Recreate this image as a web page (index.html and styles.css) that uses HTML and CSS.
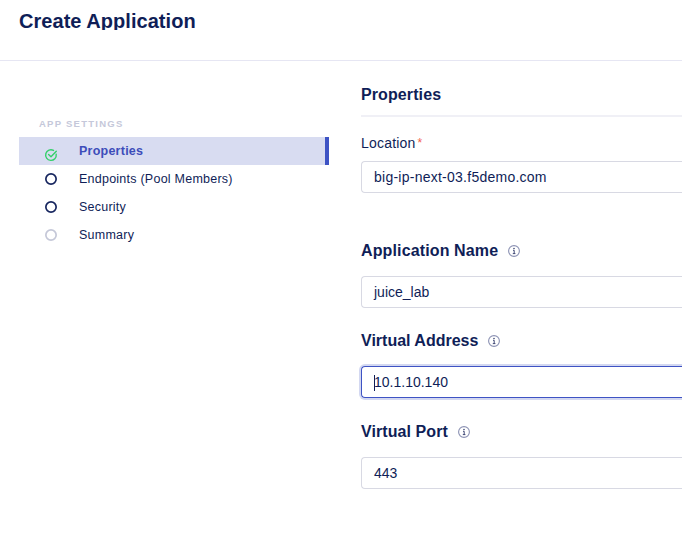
FILE: index.html
```html
<!DOCTYPE html>
<html lang="en">
<head>
<meta charset="utf-8">
<title>Create Application</title>
<link rel="stylesheet" href="styles.css">
</head>
<body>
<svg class="defs" aria-hidden="true">
  <symbol id="info" viewBox="0 0 12 12"><circle cx="6" cy="6" r="5.4" fill="none" stroke="#8b91b3" stroke-width="1.1"/><path d="M5 5.3h1.2v3.2M4.8 8.6h2.6" fill="none" stroke="#2d3768" stroke-width=".9"/><circle cx="6" cy="3.4" r=".75" fill="#2d3768"/></symbol>
</svg>
<header class="page-header"><h1>Create Application</h1></header>
<div class="layout">
  <nav class="sidebar">
    <div class="group-title">APP SETTINGS</div>
    <ul>
      <li class="step active"><svg class="mark check" viewBox="0 0 12 12"><path d="M11.2 5.3A5.3 5.3 0 1 1 8.5 1.4M3.6 5.4 6 7.7l5.3-5.5"/></svg><span>Properties</span></li>
      <li class="step"><svg class="mark ring" viewBox="0 0 12 12"><circle cx="6" cy="6" r="5.15"/></svg><span>Endpoints (Pool Members)</span></li>
      <li class="step"><svg class="mark ring" viewBox="0 0 12 12"><circle cx="6" cy="6" r="5.15"/></svg><span>Security</span></li>
      <li class="step"><svg class="mark ring muted" viewBox="0 0 12 12"><circle cx="6" cy="6" r="5.15"/></svg><span>Summary</span></li>
    </ul>
  </nav>
  <main class="content">
    <h2 class="section-title">Properties</h2>
    <label class="label"><span>Location</span><b>*</b></label>
    <div class="field location"><span>big-ip-next-03.f5demo.com</span></div>
    <h3 class="name"><span>Application Name</span><svg><use href="#info"/></svg></h3>
    <div class="field"><span>juice_lab</span></div>
    <h3 class="address"><span>Virtual Address</span><svg><use href="#info"/></svg></h3>
    <div class="field focused"><i class="caret"></i><span>10.1.10.140</span></div>
    <h3 class="port"><span>Virtual Port</span><svg><use href="#info"/></svg></h3>
    <div class="field"><span>443</span></div>
  </main>
</div>
</body>
</html>
```
FILE: styles.css
```css
* { box-sizing: border-box; }
body { margin: 0; width: 682px; height: 557px; overflow: hidden; background: #fff; color: #0f1e57; font-family: "Liberation Sans", Arial, sans-serif; }
.defs { display: none; }
h1, h2, h3, ul { margin: 0; padding: 0; }
.page-header { height: 61px; padding: 9px 19px; border-bottom: 1px solid #e6e6f3; }
h1 { height: 21px; overflow: hidden; font-size: 20px; line-height: 24px; letter-spacing: .04px; }
.layout { display: flex; padding-left: 19px; }
.sidebar { flex: none; width: 310px; padding-top: 56px; }
.group-title { height: 20px; padding-left: 20px; font-size: 9.5px; line-height: 13px; font-weight: bold; letter-spacing: 1.25px; color: #c5c8da; }
ul { list-style: none; }
.step { display: flex; align-items: center; height: 28px; padding-left: 26px; font-size: 12.5px; letter-spacing: .24px; }
.step.active { background: #d8dcf1; border-right: 4px solid #3e53c4; color: #3d4dba; font-weight: bold; }
.mark { flex: none; width: 12px; height: 12px; margin-right: 22px; fill: none; }
.ring { stroke: #17265f; stroke-width: 1.7; }
.ring.muted { stroke: #c5c8d8; }
.check { margin-top: 7px; overflow: visible; stroke: #35d06b; stroke-width: 1.4; stroke-linecap: round; stroke-linejoin: round; }
.content { flex: none; width: 321px; margin-left: 32px; padding-top: 22px; }
.section-title { height: 34px; border-bottom: 2px solid #f0f0f6; font-size: 16px; line-height: 23px; letter-spacing: .1px; }
.label { display: flex; height: 44px; padding-top: 17px; font-size: 14px; line-height: 18px; letter-spacing: .2px; }
.label b { margin-left: 2px; color: #f2604c; font-size: 12px; line-height: 18px; font-weight: normal; }
.field { position: relative; display: flex; align-items: center; height: 32px; padding-left: 12px; border: 1px solid #d8d9e3; border-right: 0; border-radius: 4px 0 0 4px; font-size: 14px; }
.location { letter-spacing: .25px; }
.focused { border-color: #3e53c4; box-shadow: 0 0 0 2px #d3d8f1; }
.caret { position: absolute; left: 12px; top: 8px; width: 1px; height: 16px; background: #0f1e57; }
h3 { display: flex; align-items: center; font-size: 16px; }
h3 svg { width: 12px; height: 12px; margin-left: 10px; }
.name { height: 83px; padding-top: 32px; letter-spacing: .13px; }
.address { height: 58px; padding-top: 8px; }
.port { height: 59px; padding-top: 8px; letter-spacing: .08px; }
```
